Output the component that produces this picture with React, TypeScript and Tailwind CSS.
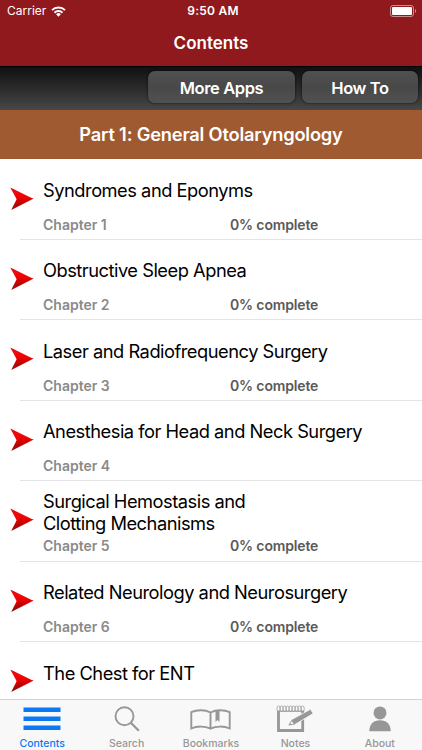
import { ReactNode } from "react";

interface Chapter {
  id: number;
  title: string;
  progress?: string;
}

interface TabProps {
  label: string;
  active?: boolean;
  children: ReactNode;
}

const chapters: Chapter[] = [
  { id: 1, title: "Syndromes and Eponyms", progress: "0% complete" },
  { id: 2, title: "Obstructive Sleep Apnea", progress: "0% complete" },
  { id: 3, title: "Laser and Radiofrequency Surgery", progress: "0% complete" },
  { id: 4, title: "Anesthesia for Head and Neck Surgery" },
  { id: 5, title: "Surgical Hemostasis and\nClotting Mechanisms", progress: "0% complete" },
  { id: 6, title: "Related Neurology and Neurosurgery", progress: "0% complete" },
];

const StatusBar = () => (
  <div className="grid h-[22px] grid-cols-3 items-center pl-[7px] pr-[5px] text-[12px] leading-none">
    <div className="flex items-center gap-[5px]">
      <span>Carrier</span>
      <svg width="15" height="11" viewBox="0 0 15 11" fill="none" stroke="#fff" strokeWidth="2">
        <path d="M1 4.1a9.2 9.2 0 0 1 13 0" />
        <path d="M3.5 6.7a5.7 5.7 0 0 1 8 0" />
        <path d="M7.5 10.7 5.1 8.3a3.4 3.4 0 0 1 4.8 0z" fill="#fff" stroke="none" />
      </svg>
    </div>
    <span className="pl-[2px] text-center font-semibold tracking-[0.25px]">9:50 AM</span>
    <svg className="justify-self-end" width="27" height="12" viewBox="0 0 27 12">
      <rect x="0.5" y="0.5" width="23" height="11" rx="2.5" fill="none" stroke="#fff" strokeOpacity="0.5" />
      <rect x="2" y="2" width="20" height="8" rx="1" fill="#fff" />
      <path d="M25 4v4c1.6-.7 1.6-3.3 0-4z" fill="#fff" fillOpacity="0.5" />
    </svg>
  </div>
);

const toolButton =
  "h-8 rounded-[7px] bg-linear-to-b from-[#505050] via-[#484848] to-[#515151] pt-[2px] text-[16.5px] font-semibold leading-none tracking-[-0.4px] text-white shadow-[0_0_2px_1px_rgba(0,0,0,0.35)]";

const Arrow = () => (
  <svg className="ml-[10px] mt-[27px] shrink-0" width="24" height="24" viewBox="0 0 24 24">
    <defs>
      <linearGradient id="arrowTop" x1="0" y1="0" x2="0" y2="1">
        <stop offset="0" stopColor="#c80d0d" />
        <stop offset="0.4" stopColor="#f40808" />
        <stop offset="1" stopColor="#ea0000" />
      </linearGradient>
      <linearGradient id="arrowBottom" x1="0" y1="0" x2="0" y2="1">
        <stop offset="0" stopColor="#e00000" />
        <stop offset="0.5" stopColor="#b40606" />
        <stop offset="1" stopColor="#861414" />
      </linearGradient>
    </defs>
    <path d="M7 11.5h16.700L1.200 22.900z" fill="url(#arrowBottom)" />
    <path d="M0.300 0.500 23.700 11.900 6.800 12.500z" fill="url(#arrowTop)" />
  </svg>
);

const ChapterRow = ({ id, title, progress }: Chapter) => (
  <li className="flex h-[80.4px] shrink-0">
    <Arrow />
    <div className="-ml-[14px] flex-1 border-b border-[#e4e4e6] pl-[23px]">
      <div className="flex h-[54px] items-center pt-[7px]">
        <h2 className="whitespace-pre text-[18.3px] leading-[22px] tracking-[-0.49px] text-black">{title}</h2>
      </div>
      <div className="flex pt-[2.3px] text-[14px] font-semibold leading-[18px] tracking-[-0.15px]">
        <span className="w-[187px] tracking-normal text-[#8a8a8a]">Chapter {id}</span>
        {progress && <span className="text-[#5a5a5a]">{progress}</span>}
      </div>
    </div>
  </li>
);

const Tab = ({ label, active, children }: TabProps) => (
  <div className={`flex flex-1 flex-col items-center ${active ? "text-[#0b79f3]" : "text-[#979797]"}`}>
    <div className="flex h-[37px] items-center justify-center">{children}</div>
    <span className="text-[10.5px] font-medium leading-[13px]">{label}</span>
  </div>
);

const App = () => (
  <div className="flex h-[750px] w-[422px] flex-col overflow-hidden bg-white font-['Inter',sans-serif]">
    <header className="h-[66px] shrink-0 bg-[#90191d] text-white">
      <StatusBar />
      <h1 className="pt-[9px] text-center text-[17px] font-semibold leading-6">Contents</h1>
    </header>

    <div className="flex h-11 shrink-0 justify-end gap-[7px] border-t border-black bg-linear-to-b from-[#111] to-[#484848] pr-1 pt-1">
      <button className={`w-[147px] ${toolButton}`}>More Apps</button>
      <button className={`w-[116px] ${toolButton}`}>How To</button>
    </div>

    <div className="flex h-[49px] shrink-0 items-center justify-center bg-[#a05a31] pt-px text-[18.3px] font-semibold tracking-[-0.2px] text-white">
      Part 1: General Otolaryngology
    </div>

    <ul className="flex min-h-0 flex-1 flex-col overflow-hidden pt-[0.6px]">
      {chapters.map((chapter) => (
        <ChapterRow key={chapter.id} {...chapter} />
      ))}
      {/* partially scrolled row */}
      <li className="flex shrink-0 gap-[9px]">
        <Arrow />
        <h2 className="pt-[20px] text-[18.3px] leading-[22px] tracking-[-0.49px] text-black">The Chest for ENT</h2>
      </li>
    </ul>

    <nav className="flex h-[51px] shrink-0 border-t border-[#d3d3d5] bg-[#f8f8f8]">
      <Tab label="Contents" active>
        <svg width="38" height="24" viewBox="0 0 38 24" fill="currentColor">
          <path d="M0.5 0.5h37v4.4h-37zM0.5 9.6h37V14h-37zM0.5 18.6h37V23h-37z" />
        </svg>
      </Tab>
      <Tab label="Search">
        <svg width="26" height="26" viewBox="0 0 26 26" fill="none" stroke="currentColor">
          <circle cx="10.5" cy="10.2" r="9" strokeWidth="1.9" />
          <path d="m16.8 16.7 8 8" strokeWidth="2.3" />
        </svg>
      </Tab>
      <Tab label="Bookmarks">
        <svg className="mt-[2px]" width="42" height="22" viewBox="0 0 42 22" fill="none" stroke="currentColor" strokeWidth="1.9">
          <path d="M20.5 3.5C15 0.6 6.8.6 1.3 3.2v16.3c5.5-2.6 13.7-2.6 19.2.2 5.5-2.8 13.7-2.8 19.2-.2V3.2C34.2.6 26 .6 20.5 3.5zv16.2" />
          <path d="M25.5 2h4v11l-2-2-2 2z" fill="currentColor" stroke="none" />
        </svg>
      </Tab>
      <Tab label="Notes">
        <svg width="38" height="28" viewBox="0 0 38 28" fill="none" stroke="currentColor">
          <path d="M2.5 6v19.500h24.200V6" strokeWidth="2.800" />
          <path d="M1.200 6.200h27" strokeWidth="1" />
          {[2, 5, 8, 11, 14, 17, 20, 23, 26].map((x) => (
            <ellipse key={x} cx={x + 0.6} cy="3.7" rx="1.700" ry="2.800" strokeWidth="0.700" />
          ))}
          <path d="m12 20.800 3.400-6.100L34.500 4.300l2.600 4.300-18.700 11.200z" fill="currentColor" stroke="#f8f8f8" strokeWidth="0.800" />
          <path d="m13 20 2.900-4.500 2.200 3.600z" fill="#f8f8f8" strokeWidth="0.700" />
          <path d="m13 20 1.200-1.900.9 1.500z" fill="currentColor" stroke="none" />
        </svg>
      </Tab>
      <Tab label="About">
        <svg width="22" height="26" viewBox="0 0 22 26" fill="currentColor">
          <circle cx="11" cy="6.900" r="6.500" />
          <path d="M0.300 25.200C0.300 18.200 4.500 14.300 11 14.300S21.700 18.200 21.700 25.200z" />
        </svg>
      </Tab>
    </nav>
  </div>
);

export default App;
